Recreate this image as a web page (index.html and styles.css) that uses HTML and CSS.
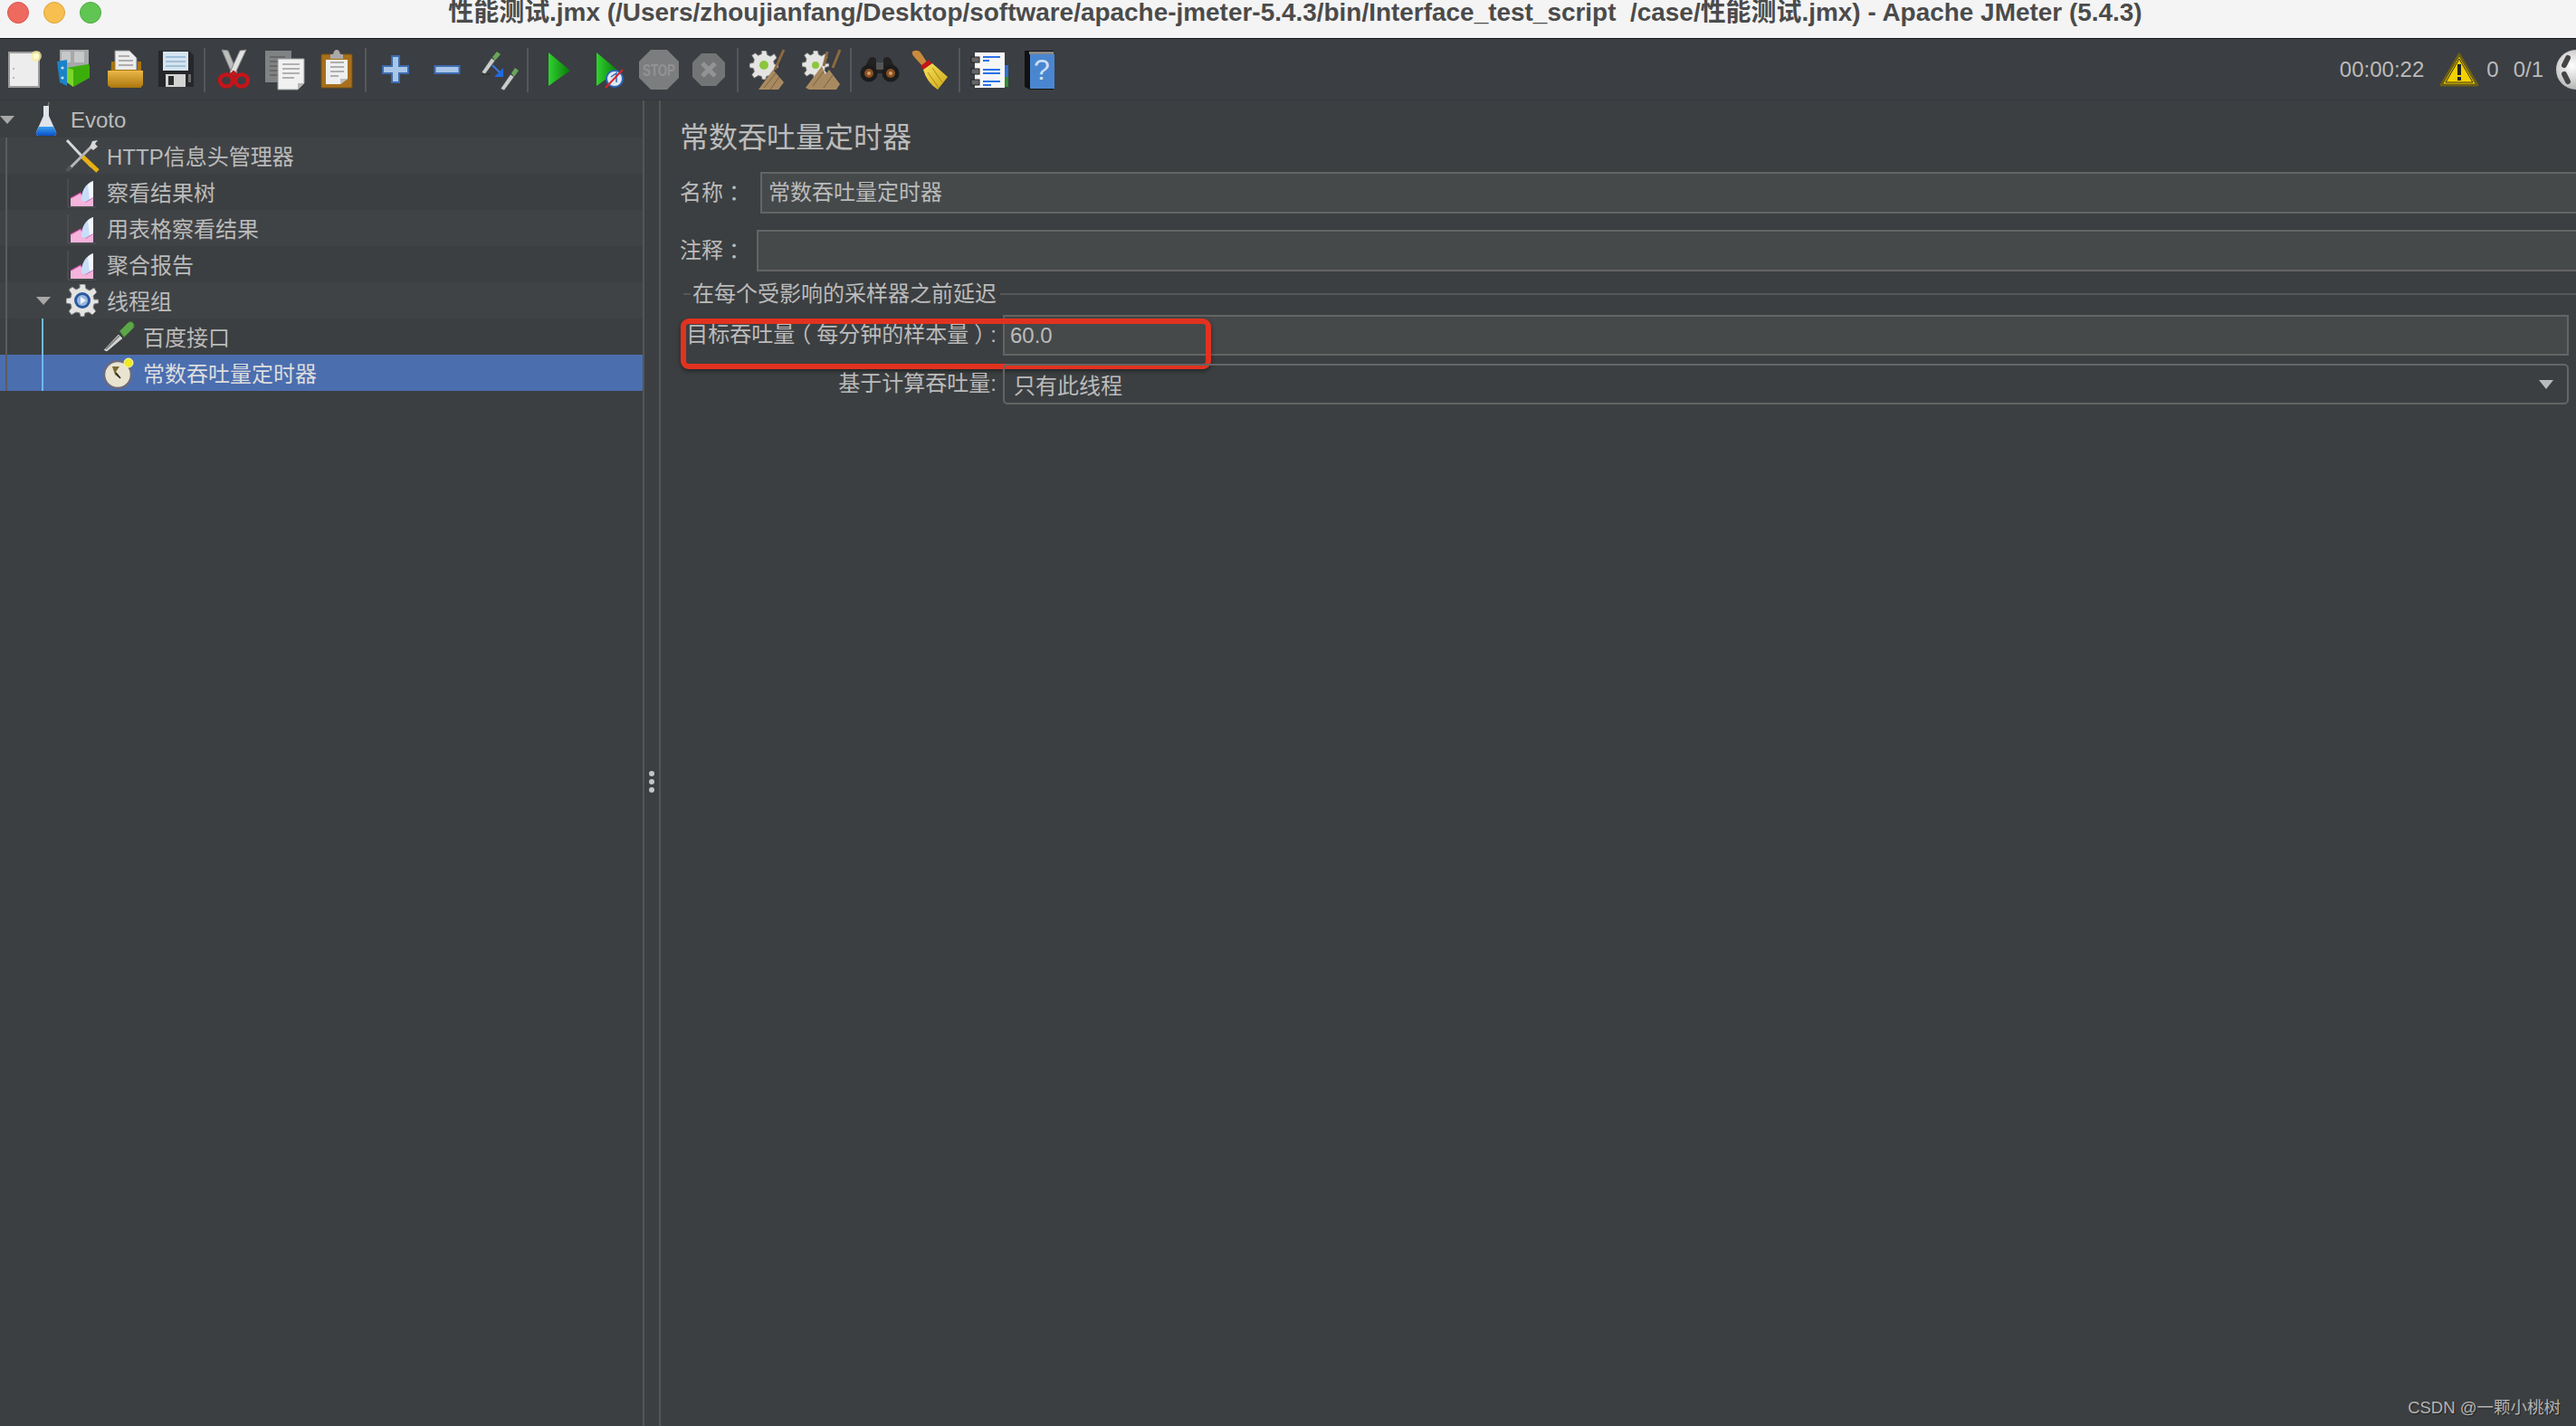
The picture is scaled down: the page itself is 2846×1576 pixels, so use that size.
FILE: index.html
```html
<!DOCTYPE html>
<html lang="zh-CN">
<head>
<meta charset="utf-8">
<title>JMeter</title>
<link rel="stylesheet" href="styles.css">
</head>
<body>
<svg class="defs" width="0" height="0" aria-hidden="true">
  <defs>
    <linearGradient id="gPlay" x1="0" y1="0" x2="1" y2="0"><stop offset="0" stop-color="#2fd22f"/><stop offset="1" stop-color="#0a7a0a"/></linearGradient>
    <linearGradient id="gFolder" x1="0" y1="0" x2="0" y2="1"><stop offset="0" stop-color="#eab84a"/><stop offset="1" stop-color="#b07a10"/></linearGradient>
    <linearGradient id="gBroom" x1="0" y1="0" x2="1" y2="1"><stop offset="0" stop-color="#f6e25a"/><stop offset="1" stop-color="#d0a818"/></linearGradient>
    <linearGradient id="gFlask" x1="0" y1="0" x2="0" y2="1"><stop offset="0" stop-color="#3ba0f0"/><stop offset="1" stop-color="#0a50c8"/></linearGradient>
    <radialGradient id="gGlobe" cx="0.4" cy="0.4" r="0.7"><stop offset="0" stop-color="#ffffff"/><stop offset="1" stop-color="#a8a8a8"/></radialGradient>
    <symbol id="graph" viewBox="0 0 36 36">
      <path d="M2 3V35H33" fill="none" stroke="#55585a" stroke-width="1"/>
      <path d="M5 34V25L16 19L22 29L30 24V34Z" fill="#f4b4dc"/>
      <path d="M5 25L16 19L22 29L30 24" fill="none" stroke="#c8489c" stroke-width="1.2"/>
      <path d="M17 28C16 18 22 8 30 6V24L22 29Z" fill="#c9dcf8"/>
      <path d="M24 10L30 6V24L26 26Z" fill="#f2f6ff"/>
    </symbol>
    <symbol id="dropper" viewBox="0 0 36 36">
      <path d="M1 33L18 15L23 20L5 35Z" fill="#cfd2d2" stroke="#3a3a3a" stroke-width="1"/>
      <path d="M4 32L19 17" stroke="#777" stroke-width="1.5"/>
      <path d="M19 12L29 2Q33 0 35 4Q36 8 33 10L24 19Z" fill="#5da64a" stroke="#3a6a30" stroke-width="1"/>
    </symbol>
    <symbol id="gear" viewBox="0 0 36 36">
      <path d="M15 0H21L22 5L26 7L31 4L34 9L30 13L31 17H36V21L31 22L30 26L33 30L29 34L25 31L21 32L20 36H16L15 32L11 31L6 34L3 30L6 26L5 22L0 21V16L5 15L6 11L3 6L7 3L11 6L15 4Z" fill="#e4e4e2" stroke="#77797a" stroke-width="1"/>
    </symbol>
  </defs>
</svg>

<div class="app">
  <header class="titlebar">
    <div class="lights">
      <span class="light red"></span><span class="light yellow"></span><span class="light green"></span>
    </div>
    <div class="title">性能测试.jmx (/Users/zhoujianfang/Desktop/software/apache-jmeter-5.4.3/bin/Interface_test_script  /case/性能测试.jmx) - Apache JMeter (5.4.3)</div>
  </header>

  <nav class="toolbar">
    <div class="group g1">
      <svg class="ti" viewBox="0 0 44 44"><rect x="6" y="3" width="33" height="38" fill="#ededed" stroke="#9c9c9c" stroke-width="2"/><circle cx="11" cy="21" r="1" fill="#aaa"/><circle cx="11" cy="31" r="1" fill="#aaa"/><circle cx="36" cy="7" r="6" fill="#f7ee9a" opacity=".75"/><circle cx="36" cy="7" r="3.5" fill="#fffbd0"/></svg>
      <svg class="ti" viewBox="0 0 44 44"><rect x="6" y="0" width="32" height="22" fill="#a6a8aa"/><path d="M8 2H18V14H8ZM22 2H33V14H22Z" fill="#c6c8ca"/><path d="M3 13L14 11L14 40L6 36Z" fill="#1c82c8"/><circle cx="9" cy="20" r="1.6" fill="#bfe0f5"/><circle cx="9" cy="31" r="1.6" fill="#bfe0f5"/><path d="M14 20L37 16Q39 16 39 19V31L21 41L14 36Z" fill="#3cae0c"/><path d="M14 20L21 22V41L14 36Z" fill="#7dd62a"/></svg>
      <svg class="ti" viewBox="0 0 44 44"><path d="M11 1H27L35 9V26H11Z" fill="#ececec" stroke="#888"/><path d="M15 7H27M15 12H31M15 17H31" stroke="#999" stroke-width="1.5"/><path d="M7 13H11V22H36V13H40V42H6Z" fill="#a87410"/><path d="M3 23H42V38Q42 41 38 41H6Q3 41 3 38Z" fill="url(#gFolder)"/></svg>
      <svg class="ti" viewBox="0 0 44 44"><path d="M3 1H37L42 6V41H3Z" fill="#26272a"/><rect x="8" y="2" width="28" height="21" fill="#d6e4ef"/><path d="M11 8H33M11 13H33M11 18H33" stroke="#8fb2d2" stroke-width="1.5"/><rect x="11" y="27" width="22" height="14" fill="#d4d4d4"/><rect x="14" y="29" width="6" height="10" fill="#2c2c2c"/><rect x="36" y="27" width="3" height="9" fill="#6b6b6b"/></svg>
    </div>
    <span class="sep"></span>
    <div class="group g2">
      <svg class="ti" viewBox="0 0 44 44"><path d="M9 0L16 1L26 25L21 28Z" fill="#bdbdbb" stroke="#85868a"/><path d="M36 0L29 1L18 25L23 28Z" fill="#e2e2e0" stroke="#85868a"/><ellipse cx="14" cy="34" rx="7" ry="6.500" fill="none" stroke="#c4141a" stroke-width="4.500"/><ellipse cx="31" cy="34" rx="7" ry="6.500" fill="none" stroke="#c4141a" stroke-width="4.500"/><path d="M18 29L22 25L26 29" fill="none" stroke="#c4141a" stroke-width="3.500"/></svg>
      <svg class="ti" viewBox="0 0 44 44"><rect x="0" y="1" width="29" height="35" fill="#808284"/><path d="M5 8H22M5 13H22M5 18H22M5 23H22M5 28H22" stroke="#66686a" stroke-width="2"/><path d="M14 10H43V37L36 44H14Z" fill="#f1f1f1" stroke="#9a9a9a"/><path d="M19 16H38M19 21H38M19 26H38M19 31H32" stroke="#9c9c9c" stroke-width="1.6"/><path d="M36 44V37H43Z" fill="#b5b5b5"/></svg>
      <svg class="ti" viewBox="0 0 44 44"><rect x="5" y="5" width="34" height="37" rx="1" fill="#a8701c" stroke="#7a5010"/><path d="M10 11H34V32L26 38H10Z" fill="#efefef"/><path d="M26 38V32H34Z" fill="#c0c0c0"/><path d="M15 14H30M15 19H30M15 24H30M15 29H24" stroke="#9a9a9a" stroke-width="1.6"/><path d="M15 10V5H18Q19 0 22 0Q25 0 26 5H29V10Z" fill="#a9a9a9"/></svg>
    </div>
    <span class="sep"></span>
    <div class="group g3">
      <svg class="ti" viewBox="0 0 44 44"><path d="M18 7H26V18H36V26H26V36H18V26H8V18H18Z" fill="#a9c6e8" stroke="#3c6cb0" stroke-width="2"/></svg>
      <svg class="ti" viewBox="0 0 44 44"><rect x="8.500" y="18" width="27" height="8" fill="#a9c6e8" stroke="#3c6cb0" stroke-width="2"/></svg>
      <svg class="ti" viewBox="0 0 44 44"><path d="M3 25L14 9L18 12L7 27Z" fill="#c9cccc" stroke="#444" stroke-width=".7"/><path d="M15 8L20 2L24 5L18 12Z" fill="#6aa45a"/><path d="M3 27H13" stroke="#2c2c2c" stroke-width="1"/><path d="M24 43L35 27L39 30L28 45Z" fill="#c9cccc" stroke="#444" stroke-width=".7"/><path d="M36 26L40 20L44 23L39 30Z" fill="#6aa45a"/><path d="M15 17L24 26" stroke="#3a7ce0" stroke-width="2"/><path d="M27 20V30H17Z" fill="#2268e0"/></svg>
    </div>
    <span class="sep"></span>
    <div class="group g4">
      <svg class="ti" viewBox="0 0 44 44"><path d="M10 3L34 23L10 40Z" fill="url(#gPlay)"/></svg>
      <svg class="ti" viewBox="0 0 44 44"><path d="M8 3L32 23L8 40Z" fill="url(#gPlay)"/><circle cx="28" cy="32" r="9" fill="#dfe8f2" stroke="#2c66b8" stroke-width="2"/><path d="M24 30L30 26V36" fill="none" stroke="#2c66b8" stroke-width="1.5"/><path d="M18 42L37 22" stroke="#d8262a" stroke-width="2"/></svg>
      <svg class="ti" viewBox="0 0 44 44"><path d="M13 0H31L44 13V31L31 44H13L0 31V13Z" fill="#7c7d7e"/><text class="stop-text" x="22" y="29" textLength="36" lengthAdjust="spacingAndGlyphs">STOP</text></svg>
      <svg class="ti" viewBox="0 0 44 44"><path d="M14 4H30L40 14V30L30 40H14L4 30V14Z" fill="#737475"/><path d="M15 15L29 29M29 15L15 29" stroke="#929394" stroke-width="5"/></svg>
    </div>
    <span class="sep"></span>
    <div class="group g5">
      <svg class="ti" viewBox="0 0 44 44"><use href="#gear" x="2" y="1" width="32" height="32"/><circle cx="18" cy="17" r="5" fill="#8cc63e"/><path d="M12 44L28 22L40 36L34 44Z" fill="#a98a60"/><path d="M30 22L40 0" stroke="#8c6a42" stroke-width="3"/><path d="M18 42L31 26M25 44L35 30" stroke="#7a6040" stroke-width="1"/></svg>
      <svg class="ti" viewBox="0 0 44 44"><use href="#gear" x="0" y="1" width="30" height="30"/><circle cx="15" cy="17" r="4" fill="#8cc63e"/><path d="M4 42L22 18L26 28L30 22L42 38L38 44H8Z" fill="#a98a60"/><path d="M24 18L28 2M34 20L42 0" stroke="#8c6a42" stroke-width="3"/><path d="M12 40L24 24M24 42L34 28" stroke="#7a6040" stroke-width="1"/></svg>
    </div>
    <span class="sep"></span>
    <div class="group g6">
      <svg class="ti" viewBox="0 0 44 44"><path d="M10 10Q14 6 18 10V15H26V10Q30 6 34 10L42 26H2Z" fill="#222"/><rect x="18" y="14" width="8" height="8" fill="#555"/><circle cx="10" cy="26" r="9.500" fill="#1c1c1c"/><circle cx="34" cy="26" r="9.500" fill="#1c1c1c"/><circle cx="10" cy="26" r="5" fill="#8a5020"/><circle cx="34" cy="26" r="5" fill="#8a5020"/><circle cx="10" cy="26" r="2" fill="#d0a070"/><circle cx="34" cy="26" r="2" fill="#d0a070"/></svg>
      <svg class="ti" viewBox="0 0 44 44"><path d="M2 2Q8 -1 11 3L19 15L14 19L5 9Q1 6 2 2Z" fill="#c98a3c"/><path d="M11 18L20 11L24 16L15 23Z" fill="#c4141a"/><path d="M14 22L24 15L41 30L30 44Q18 36 14 22Z" fill="url(#gBroom)"/><path d="M19 25L31 42M24 20L35 36" stroke="#b08a10" stroke-width="1"/></svg>
    </div>
    <span class="sep"></span>
    <div class="group g7">
      <svg class="ti" viewBox="0 0 44 44"><rect x="33" y="17" width="10" height="13" fill="#2f6fd0"/><rect x="33" y="30" width="10" height="11" fill="#2e8b2e"/><rect x="6" y="3" width="33" height="39" fill="#f6f6f6"/><path d="M15 8H34M15 12H22M15 22H34M15 26H34M15 35H34M15 39H24" stroke="#2c72e8" stroke-width="2"/><rect x="2" y="8" width="9" height="6" fill="#666" stroke="#222"/><rect x="2" y="21" width="9" height="6" fill="#666" stroke="#222"/><rect x="2" y="33" width="9" height="6" fill="#666" stroke="#222"/></svg>
      <svg class="ti" viewBox="0 0 44 44"><path d="M6 1H38V44H12L6 41Z" fill="#111"/><rect x="11" y="2" width="27" height="3" fill="#8a8a8a"/><rect x="12" y="5" width="27" height="38" fill="#4a86d0"/><text class="help-text" x="25" y="33">?</text></svg>
    </div>
    <div class="status">
      <span class="time">00:00:22</span>
      <svg class="warn" viewBox="0 0 44 38"><path d="M22 2L42 36H2Z" fill="#f5d000" stroke="#6b5e14" stroke-width="3" stroke-linejoin="round"/><path d="M22 7L37 33H7Z" fill="none" stroke="#2a2a18" stroke-width="1"/><rect x="20" y="13" width="4" height="12" fill="#222"/><rect x="20" y="27" width="4" height="4" fill="#222"/></svg>
      <span class="count">0</span>
      <span class="threads">0/1</span>
      <svg class="globe" viewBox="0 0 46 46"><circle cx="23" cy="23" r="22" fill="url(#gGlobe)"/><path d="M14 10L10 18M14 36L10 28" stroke="#444" stroke-width="6" stroke-linecap="round"/></svg>
    </div>
  </nav>

  <main class="main">
    <aside class="tree">
      <span class="line line-root"></span>
      <span class="line line-group"></span>
      <div class="row root">
        <span class="arrow a0"></span>
        <svg class="ico flask" viewBox="0 0 24 38"><path d="M15 0L14 5" stroke="#777" stroke-width="1.500"/><path d="M9 4H15V15L23 33Q24 37 20 37H4Q0 37 1 33L9 15Z" fill="#dfe4ea"/><path d="M4 27H20L23 33Q24 37 20 37H4Q0 37 1 33Z" fill="url(#gFlask)"/></svg>
        <span class="label">Evoto</span>
      </div>
      <div class="row alt indent1">
        <svg class="ico" viewBox="0 0 36 36"><path d="M1 1L28 30" stroke="#d8d8d8" stroke-width="3"/><path d="M18 19L35 35" stroke="#e8b010" stroke-width="5"/><path d="M30 6L3 33" stroke="#b8b8b8" stroke-width="3"/><path d="M1 35L5 30" stroke="#555" stroke-width="4"/><path d="M26 9L29 2L35 1L32 5L35 8L30 12Z" fill="#d8d8d8"/></svg>
        <span class="label">HTTP信息头管理器</span>
      </div>
      <div class="row indent1"><svg class="ico"><use href="#graph"/></svg><span class="label">察看结果树</span></div>
      <div class="row alt indent1"><svg class="ico"><use href="#graph"/></svg><span class="label">用表格察看结果</span></div>
      <div class="row indent1"><svg class="ico"><use href="#graph"/></svg><span class="label">聚合报告</span></div>
      <div class="row alt indent1">
        <span class="arrow a1"></span>
        <svg class="ico" viewBox="0 0 36 36"><use href="#gear"/><circle cx="18" cy="18" r="9" fill="#2c5aa0"/><circle cx="18" cy="18" r="6" fill="#9ab8e0"/><path d="M16 14L22 18L16 22Z" fill="#f0f4fa"/></svg>
        <span class="label">线程组</span>
      </div>
      <div class="row indent2"><svg class="ico"><use href="#dropper"/></svg><span class="label">百度接口</span></div>
      <div class="row selected indent2">
        <svg class="ico" viewBox="0 0 36 36"><circle cx="17" cy="20" r="15" fill="#e8e4d0" stroke="#6a6a80" stroke-width="2.500"/><path d="M11 11H19L15 17L19 24L14 20Z" fill="#7a6a30"/><path d="M15 18L20 24" stroke="#222" stroke-width="1.500"/><circle cx="29" cy="7" r="5" fill="#f0e820" stroke="#fffbb0"/></svg>
        <span class="label">常数吞吐量定时器</span>
      </div>
    </aside>

    <div class="splitter"><span class="dot"></span><span class="dot"></span><span class="dot"></span></div>

    <section class="panel">
      <h1 class="heading">常数吞吐量定时器</h1>
      <div class="field name-row">
        <label class="field-label">名称<span class="fw">：</span></label>
        <div class="input">常数吞吐量定时器</div>
      </div>
      <div class="field comment-row">
        <label class="field-label">注释<span class="fw">：</span></label>
        <div class="input"></div>
      </div>
      <div class="legend"><span class="rule-short"></span><span class="legend-text">在每个受影响的采样器之前延迟</span><span class="rule-long"></span></div>
      <div class="param throughput">
        <label class="param-label">目标吞吐量<span class="fw">（</span>每分钟的样本量<span class="fw">）</span>:</label>
        <div class="input num">60.0</div>
        <span class="annotation"></span>
      </div>
      <div class="param based">
        <label class="param-label">基于计算吞吐量:</label>
        <div class="combo"><span>只有此线程</span><span class="combo-arrow"></span></div>
      </div>
    </section>
  </main>
  <div class="watermark">CSDN @一颗小桃树</div>
</div>
</body>
</html>
```
FILE: styles.css
```css
* { box-sizing: border-box; }
html, body { margin: 0; height: 100%; overflow: hidden; background: #3c3f41; }
body { font-family: "Liberation Sans", "Noto Sans CJK SC", sans-serif; font-size: 24px; color: #bbbbbb; }
.defs { position: absolute; }
.app { position: relative; display: flex; flex-direction: column; height: 100vh; }

.titlebar { position: relative; flex: none; height: 43px; background: #f4f4f4; border-bottom: 1px solid #17181a; }
.lights { position: absolute; left: 8px; top: 2px; display: flex; gap: 16px; }
.light { width: 24px; height: 24px; border-radius: 50%; }
.red { background: #ee6a5f; border: 1px solid #d9534a; }
.yellow { background: #f6bf4f; border: 1px solid #dfa33a; }
.green { background: #61c554; border: 1px solid #4dab40; }
.title { padding-left: 16px; text-align: center; white-space: pre; font-size: 27.950px; font-weight: 700; line-height: 28px; color: #4b4b4b; }

.toolbar { flex: none; display: flex; align-items: center; height: 68px; padding: 1px 0 0 4px; background: #3b3e42; border-bottom: 1px solid #34373a; overflow: hidden; }
.group { display: flex; gap: 12px; flex: none; }
.g2 { gap: 13px; }
.g3 { gap: 13px; }
.g4 { gap: 11px; }
.g5 { gap: 16px; }
.g6 { gap: 12px; }
.g7 { gap: 11px; }
.ti { width: 44px; height: 44px; flex: none; overflow: visible; }
.sep { flex: none; width: 2px; height: 49px; margin: 0 9px; background: #55585b; }
.g2 + .sep { margin-right: 10px; }
.g3 + .sep { margin-right: 12px; }
.g4 + .sep { margin-right: 10px; }
.g6 + .sep { margin-right: 10px; }
.stop-text { font-size: 19px; font-weight: 700; fill: #929394; text-anchor: middle; }
.help-text { font-size: 32px; fill: #cfe0f5; text-anchor: middle; }
.status { display: flex; align-items: center; margin-left: auto; flex: none; white-space: nowrap; }
.time { margin-right: 17px; }
.warn { width: 44px; height: 38px; margin-right: 8px; }
.count { margin-right: 16px; }
.threads { margin-right: 13px; }
.globe { width: 46px; height: 46px; margin-right: -23px; }

.main { flex: 1; display: flex; min-height: 0; }
.tree { position: relative; flex: none; width: 710px; padding-top: 1px; }
.row { position: relative; display: flex; align-items: center; height: 40px; padding-left: 39px; color: #bbbbbb; }
.row.alt { background: #404346; }
.row.indent1 { padding-left: 73px; }
.row.indent2 { padding-left: 113px; }
.row.selected { background: #4b6eaf; color: #dddddd; }
.row .label { margin-bottom: 2px; }
.row.root .label { margin-bottom: 0; margin-top: 2px; }
.ico { width: 36px; height: 36px; flex: none; margin-right: 9px; overflow: visible; }
.flask { width: 24px; height: 38px; margin-right: 15px; }
.arrow { position: absolute; width: 0; height: 0; border-left: 8px solid transparent; border-right: 8px solid transparent; border-top: 9px solid #a8a8a8; top: 16px; }
.a0 { left: 0; }
.a1 { left: 40px; }
.line { position: absolute; z-index: 1; width: 2px; }
.line-root { left: 6px; top: 41px; height: 280px; background: #5a5c5e; }
.line-group { left: 46px; top: 241px; height: 80px; background: #6fb7f0; }

.splitter { flex: none; width: 20px; display: flex; flex-direction: column; align-items: center; justify-content: flex-start; gap: 3px; padding-top: 741px; border-left: 2px solid #535557; border-right: 2px solid #535557; }
.dot { width: 6px; height: 6px; border-radius: 50%; background: #c4c4c4; }

.panel { flex: 1; min-width: 0; padding: 21px 0 0 21px; overflow: hidden; }
.heading { margin: 0; font-size: 32px; font-weight: 400; line-height: 40px; color: #bbbbbb; }
.field { display: flex; height: 46px; margin-top: 18px; margin-right: -30px; }
.field-label { flex: none; line-height: 46px; }
.fw { font-feature-settings: "halt"; padding: 0 6px; }
.name-row .field-label { width: 89px; }
.comment-row .field-label { width: 85px; }
.input { flex: 1; min-width: 0; height: 46px; padding-left: 7px; line-height: 42px; background: #45494a; border: 2px solid #646464; }
.input.num { padding-left: 6px; }
.legend { display: flex; align-items: center; height: 24px; margin-top: 13px; }
.rule-short { flex: none; width: 8px; height: 2px; margin-left: 4px; margin-right: 2px; background: #55585a; }
.legend-text { flex: none; line-height: 24px; }
.rule-long { flex: 1; height: 2px; margin-left: 4px; background: #55585a; }
.param { position: relative; display: flex; height: 45px; margin-right: 8px; }
.throughput { margin-top: 11px; }
.based { margin-top: 9px; }
.param-label { flex: none; width: 357px; padding-right: 7px; text-align: right; line-height: 44px; white-space: nowrap; }
.param .input { height: 45px; }
.combo { flex: 1; display: flex; align-items: center; justify-content: space-between; padding: 0 15px 0 10px; border: 2px solid #646464; border-radius: 5px; }
.combo-arrow { width: 0; height: 0; border-left: 8px solid transparent; border-right: 8px solid transparent; border-top: 10px solid #bbbbbb; }
.annotation { position: absolute; left: 1px; top: 4px; width: 586px; height: 56px; border: 6px solid #e2321f; border-radius: 9px; box-shadow: 0 2px 5px rgba(0,0,0,.45); }

.watermark { position: absolute; right: 17px; bottom: 8px; font-size: 18.500px; line-height: 24px; color: #b4b4b4; text-shadow: 1px 1px 1px #222; }
```
